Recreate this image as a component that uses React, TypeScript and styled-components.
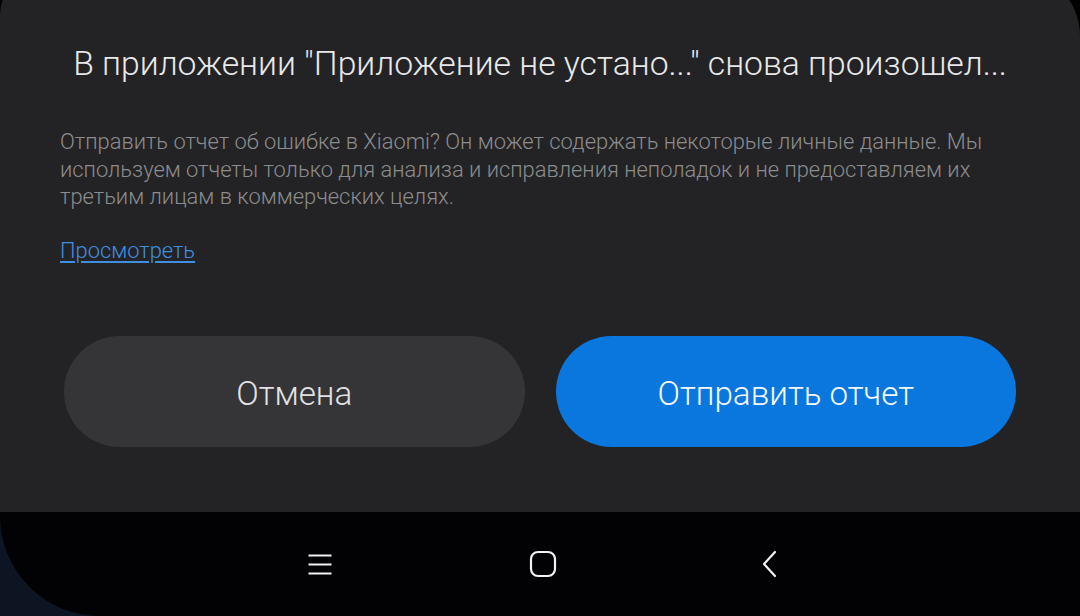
import React from "react";
import styled, { createGlobalStyle } from "styled-components";

const Global = createGlobalStyle`
  html, body { margin: 0; padding: 0; background: #0d1422; }
  body { width: 1080px; height: 616px; overflow: hidden; font-family: Roboto, "Noto Sans", sans-serif; }
  #root { width: 1080px; height: 616px; }
`;

const LIGHT = `"Roboto Light", Roboto, "Noto Sans", sans-serif`;

const Screen = styled.div`
  width: 1080px;
  height: 616px;
  display: flex;
  flex-direction: column;
  background: #000;
  overflow: hidden;
`;

const Dialog = styled.div`
  height: 542px;
  margin-top: -30px;
  padding-top: 30px;
  box-sizing: border-box;
  background: #232325;
  border-radius: 45px 66px 0 0;
  display: flex;
  flex-direction: column;
`;

const Title = styled.h1`
  margin: 44px 0 0;
  font-family: ${LIGHT};
  font-weight: 300;
  font-size: 33.7px;
  line-height: 40px;
  color: #e8e8e8;
  text-align: center;
  white-space: nowrap;
`;

const Body = styled.p`
  margin: 44px 50px 0 60px;
  font-family: ${LIGHT};
  font-weight: 300;
  font-size: 21.9px;
  line-height: 27.5px;
  color: #8c8c8e;
`;

const Link = styled.a`
  margin: 26px 0 0 60px;
  font-family: ${LIGHT};
  font-weight: 300;
  font-size: 21.9px;
  line-height: 27px;
  color: #3f8fe0;
  text-decoration: underline;
  text-underline-offset: 3px;
  align-self: flex-start;
`;

const Buttons = styled.div`
  margin: 72px 64px 0 64px;
  display: grid;
  grid-template-columns: 1fr 1fr;
  gap: 31px;
`;

const Button = styled.button<{ $primary?: boolean }>`
  height: 111px;
  border: none;
  border-radius: 56px;
  background: ${(p) => (p.$primary ? "#0a77de" : "#353537")};
  color: ${(p) => (p.$primary ? "#f4f8fc" : "#e2e2e2")};
  font-family: ${LIGHT};
  font-weight: 300;
  font-size: 33.2px;
  padding: 0;
  padding-top: 4px;
`;

const NavArea = styled.div`
  flex: 1;
  background: #0d1422;
  display: flex;
`;

const NavBar = styled.div`
  flex: 1;
  background: #020204;
  border-bottom-left-radius: 100px;
  display: flex;
  align-items: center;
  justify-content: center;
  padding: 0 0 0 10px;
`;

const NavSlot = styled.div<{ $x: number }>`
  width: 32px;
  height: 32px;
  display: flex;
  align-items: center;
  justify-content: center;
  margin-left: ${(p) => p.$x}px;
`;

export default function App() {
  return (
    <>
      <Global />
      <Screen>
        <Dialog>
          <Title>В приложении "Приложение не устано..." снова произошел...</Title>
          <Body>
            Отправить отчет об ошибке в Xiaomi? Он может содержать некоторые личные данные. Мы
            используем отчеты только для анализа и исправления неполадок и не предоставляем их
            третьим лицам в коммерческих целях.
          </Body>
          <Link href="#">Просмотреть</Link>
          <Buttons>
            <Button>Отмена</Button>
            <Button $primary>Отправить отчет</Button>
          </Buttons>
        </Dialog>
        <NavArea>
          <NavBar>
            <NavSlot $x={0}>
              <svg width="26" height="24" viewBox="0 0 26 24">
                <path d="M1.5 3.5H24.5M1.5 12.5H24.5M1.5 21.5H24.5" stroke="#f2f2f2" strokeWidth="2" fill="none" />
              </svg>
            </NavSlot>
            <NavSlot $x={191}>
              <svg width="28" height="28" viewBox="0 0 28 28">
                <rect x="2" y="2" width="24" height="24" rx="7" stroke="#f2f2f2" strokeWidth="2.2" fill="none" />
              </svg>
            </NavSlot>
            <NavSlot $x={195}>
              <svg width="18" height="28" viewBox="0 0 18 28">
                <path d="M14 2L3 14L14 26" stroke="#f2f2f2" strokeWidth="2.2" fill="none" strokeLinecap="round" strokeLinejoin="round" />
              </svg>
            </NavSlot>
          </NavBar>
        </NavArea>
      </Screen>
    </>
  );
}
